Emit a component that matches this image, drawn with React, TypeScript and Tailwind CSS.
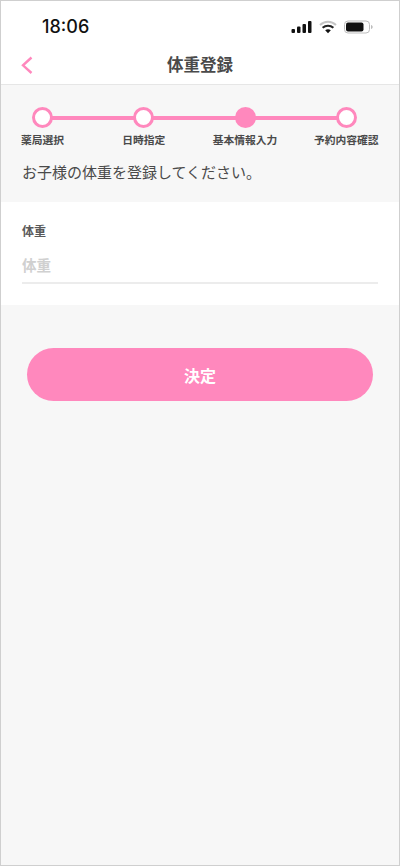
const font = { jp: "font-['Noto_Sans_CJK_JP','Noto_Sans',sans-serif]" };

const steps = [
  { label: "薬局選択", active: false },
  { label: "日時指定", active: false },
  { label: "基本情報入力", active: true },
  { label: "予約内容確認", active: false },
];

function StatusIcons() {
  return (
    <div className="flex h-[22px] items-center">
      <svg width="21" height="14" viewBox="0 0 21 14" className="block">
        <rect x="0.5" y="9" width="3.5" height="4" rx="1" fill="#111" />
        <rect x="6" y="6.5" width="3.5" height="6.5" rx="1" fill="#111" />
        <rect x="11.5" y="4" width="3.5" height="9" rx="1" fill="#111" />
        <rect x="17" y="1" width="3.500" height="12" rx="1" fill="#111" />
      </svg>
      <svg width="18" height="14" viewBox="0 0 18 14" className="ml-[7px] block">
        <path d="M1 5C5.500 .6 12.500 .6 17 5" fill="none" stroke="#c4c4c4" strokeWidth="2" />
        <path d="M3.600 7.800C6.700 5 11.300 5 14.400 7.800" fill="none" stroke="#222" strokeWidth="2" />
        <path d="M6.200 10.200 9 13.300l2.800-3.100C10 8.900 8 8.900 6.200 10.200Z" fill="#111" />
      </svg>
      <svg width="29" height="14" viewBox="0 0 29 14" className="ml-[7px] block">
        <rect x="0.5" y="1" width="25" height="12" rx="3.5" fill="none" stroke="#bdbdbd" />
        <rect x="2" y="2.5" width="17.5" height="9" rx="2" fill="#111" />
        <path d="M27 5v4c1-.3 1.700-1 1.700-2S28 5.300 27 5Z" fill="#bdbdbd" />
      </svg>
    </div>
  );
}

function Stepper() {
  return (
    <div className="relative -ml-[30px] grid w-[405px] grid-cols-4">
      <div className="absolute left-[12.5%] right-[12.5%] top-[9px] h-[4px] bg-[#ff88bd]" />
      {steps.map((s) => (
        <div key={s.label} className="relative flex flex-col items-center">
          <div
            className={
              s.active
                ? "h-[21px] w-[21px] rounded-full bg-[#ff88bd]"
                : "h-[21px] w-[21px] rounded-full border-[3.5px] border-[#ff88bd] bg-white"
            }
          />
          <span className="mt-[4px] whitespace-nowrap text-[10.75px] font-bold leading-[16px] text-[#4a4a4a]">
            {s.label}
          </span>
        </div>
      ))}
    </div>
  );
}

export default function App() {
  return (
    <div
      className={`flex h-[866px] w-[400px] flex-col overflow-hidden border border-[#cfcfcf] bg-[#f7f7f7] ${font.jp}`}
    >
      <div className="flex h-[49px] items-start justify-between bg-white pl-[41px] pr-[26px] pt-[15px]">
        <span className="font-['Inter',sans-serif] text-[18px] font-medium leading-[22px] text-[#111]">
          18:06
        </span>
        <StatusIcons />
      </div>

      <div className="relative flex h-[35px] items-center justify-center border-b border-[#e6e6e6] bg-white pb-[6px]">
        <svg
          width="14"
          height="20"
          viewBox="0 0 14 20"
          className="absolute left-[19px] top-[6px]"
        >
          <path d="M11.500 1.500 3 9.300l8.500 7.700" fill="none" stroke="#ff88bd" strokeWidth="2.400" />
        </svg>
        <span className="text-[16.5px] font-bold leading-[24px] text-[#4a4a4a]">体重登録</span>
      </div>

      <div className="px-[21px] pt-[22px]">
        <Stepper />
        <p className="mt-[13px] text-[15px] leading-[22px] text-[#4a4a4a]">
          お子様の体重を登録してください。
        </p>
      </div>

      <div className="mt-[19px] bg-white px-[21px] pb-[21px] pt-[19px]">
        <label className="block text-[12px] font-bold leading-[20px] text-[#5a5a5a]">体重</label>
        <div className="mt-[11px] border-b-2 border-[#ececec] pb-[4px] text-[14.500px] font-bold leading-[26px] text-[#d0d0d0]">
          体重
        </div>
      </div>

      <div className="px-[26px] pt-[43px]">
        <button
          type="button"
          className="flex h-[53px] w-full items-center justify-center rounded-full bg-[#ff88bd] text-[16px] font-bold text-white"
        >
          決定
        </button>
      </div>
    </div>
  );
}
